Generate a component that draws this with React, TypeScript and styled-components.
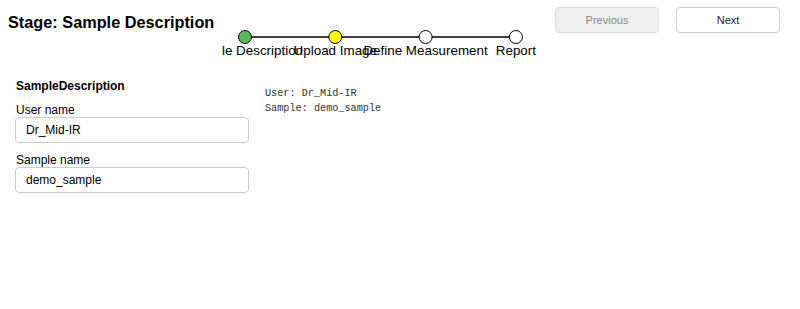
import React from 'react';
import styled, { createGlobalStyle } from 'styled-components';

const GlobalStyle = createGlobalStyle`
  html, body {
    margin: 0;
    padding: 0;
    background: #fff;
    font-family: "Liberation Sans", Arial, sans-serif;
    color: #000;
  }
`;

const steps = [
  { label: 'Sample Description', fill: '#5cb85c' },
  { label: 'Upload Image', fill: '#ffff00' },
  { label: 'Define Measurement', fill: '#fff' },
  { label: 'Report', fill: '#fff' },
];

const Page = styled.div`
  width: 800px;
  height: 309px;
  box-sizing: border-box;
`;

const Header = styled.header`
  display: flex;
  align-items: flex-start;
  height: 64px;
  padding: 0 20px 0 8px;
`;

const Title = styled.h2`
  margin: 12px 0 0;
  width: 214px;
  font-size: 16.3px;
  font-weight: bold;
  line-height: 20px;
  white-space: nowrap;
`;

const Stepper = styled.svg`
  display: block;
  margin-top: 27px;
  overflow: hidden;
`;

const Buttons = styled.div`
  display: flex;
  gap: 17px;
  margin-left: auto;
  margin-top: 7px;
`;

const Button = styled.button<{ $disabled?: boolean }>`
  width: 104px;
  height: 26px;
  border-radius: 4px;
  border: 1px solid ${({ $disabled }) => ($disabled ? '#e0e0e0' : '#cfcfcf')};
  background: ${({ $disabled }) => ($disabled ? '#efefef' : '#fff')};
  color: ${({ $disabled }) => ($disabled ? '#888' : '#222')};
  font-family: "Liberation Sans", Arial, sans-serif;
  font-size: 11px;
  padding: 0;
`;

const Body = styled.main`
  display: flex;
  align-items: flex-start;
  padding: 15px 0 0 15px;
`;

const Form = styled.section`
  width: 234px;
`;

const FormTitle = styled.h4`
  margin: 0 0 0 1px;
  font-size: 12px;
  font-weight: bold;
  line-height: 14px;
`;

const Label = styled.label`
  display: block;
  margin: 10px 0 0 1px;
  font-size: 12px;
  line-height: 14px;
`;

const Input = styled.input`
  display: block;
  box-sizing: border-box;
  width: 234px;
  height: 26px;
  margin: 0;
  padding: 0 10px;
  border: 1px solid #cdcdcd;
  border-radius: 4px;
  font-family: "Liberation Sans", Arial, sans-serif;
  font-size: 12px;
  color: #000;
  outline: none;
`;

const Summary = styled.pre`
  margin: 7px 0 0 16px;
  font-family: "Liberation Mono", "Courier New", monospace;
  font-size: 10.2px;
  line-height: 15px;
  color: #333;
`;

export default function App() {
  const userName = 'Dr_Mid-IR';
  const sampleName = 'demo_sample';
  return (
    <Page>
      <GlobalStyle />
      <Header>
        <Title>Stage: Sample Description</Title>
        <Stepper width="320" height="32" viewBox="0 0 320 32">
          <line x1="23" y1="10" x2="294" y2="10" stroke="#000" strokeWidth="1.5" />
          {steps.map((s, i) => {
            const cx = 23 + i * 90.3;
            return (
              <g key={s.label}>
                <circle cx={cx} cy="10" r="6.5" fill={s.fill} stroke="#000" strokeWidth="1" />
                <text
                  x={cx}
                  y="28"
                  textAnchor="middle"
                  fontFamily="Liberation Sans, Arial, sans-serif"
                  fontSize="13.4"
                  fill="#000"
                >
                  {s.label}
                </text>
              </g>
            );
          })}
        </Stepper>
        <Buttons>
          <Button $disabled disabled>Previous</Button>
          <Button>Next</Button>
        </Buttons>
      </Header>
      <Body>
        <Form>
          <FormTitle>SampleDescription</FormTitle>
          <Label>User name</Label>
          <Input defaultValue={userName} />
          <Label>Sample name</Label>
          <Input defaultValue={sampleName} />
        </Form>
        <Summary>{`User: ${userName}\nSample: ${sampleName}`}</Summary>
      </Body>
    </Page>
  );
}
